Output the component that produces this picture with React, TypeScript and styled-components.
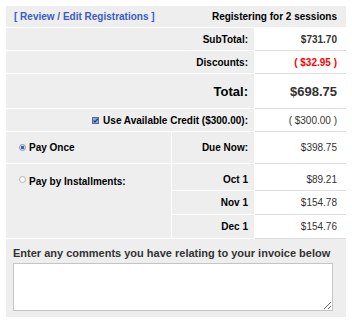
import React from "react";
import styled, { createGlobalStyle, css } from "styled-components";

const Global = createGlobalStyle`
  html, body { margin: 0; padding: 0; background: #ffffff; }
  body { font-family: "Liberation Sans", Arial, sans-serif; }
`;

const Page = styled.div`
  padding: 6px 0 0 6px;
`;

const Table = styled.div`
  width: 340px;
  display: grid;
  grid-template-columns: 165px 82px 91px;
  grid-template-rows: 21px 22px 22px 34px 22px 31px 26px 23px 23px 78px;
  gap: 1px;
  background: #ffffff;
  font-size: 10px;
  font-weight: bold;
  color: #000;
`;

const HeaderRow = styled.div`
  grid-column: 1 / -1;
  background: #eeeeee;
  display: flex;
  align-items: center;
  justify-content: space-between;
  padding: 0 9px 0 8px;
`;

const EditLink = styled.a`
  color: #3a5cc5;
  text-decoration: none;
  cursor: pointer;
`;

const LabelCell = styled.div<{ $wide?: boolean; $big?: boolean; $padTop?: number }>`
  grid-column: ${(p) => (p.$wide ? "1 / 3" : "2 / 3")};
  background: #eeeeee;
  display: flex;
  align-items: center;
  justify-content: flex-end;
  padding: ${(p) => (p.$padTop ? `${p.$padTop}px` : "0")} 6px 0 0;
  font-size: ${(p) => (p.$big ? "13px" : "10px")};
`;

const ValueCell = styled.div<{ $tone?: "red" | "strong" | "plain"; $big?: boolean; $padTop?: number }>`
  background: #ffffff;
  box-shadow: 0 1px 0 #dddddd;
  display: flex;
  align-items: center;
  justify-content: flex-end;
  padding: ${(p) => (p.$padTop ? `${p.$padTop}px` : "0")} 9px 0 0;
  font-size: ${(p) => (p.$big ? "13px" : "10px")};
  ${(p) =>
    p.$tone === "red"
      ? css`color: #ff0000; font-weight: bold;`
      : p.$tone === "plain"
      ? css`color: #333333; font-weight: normal;`
      : css`color: #333333; font-weight: bold;`}
`;

const OptionCell = styled.div<{ $rows?: number; $top?: boolean }>`
  grid-column: 1 / 2;
  grid-row: span ${(p) => p.$rows ?? 1};
  background: #eeeeee;
  display: flex;
  align-items: ${(p) => (p.$top ? "flex-start" : "center")};
  gap: 3px;
  padding: ${(p) => (p.$top ? "12px 0 0 13px" : "0 0 0 13px")};
`;

const Radio = styled.span<{ $checked?: boolean }>`
  box-sizing: border-box;
  width: 7px;
  height: 7px;
  border-radius: 50%;
  border: 1px solid ${(p) => (p.$checked ? "#7f8fb8" : "#b5b5b5")};
  background: ${(p) => (p.$checked ? "radial-gradient(circle, #3d5ea8 0 1.5px, #dfe6f5 2px)" : "#fafafa")};
  display: inline-block;
  flex: none;
  margin-top: ${(p) => (p.$checked ? "0" : "0")};
`;

const CheckBox = styled.span`
  width: 7px;
  height: 7px;
  margin-right: 4px;
  display: inline-flex;
  flex: none;
`;

const Comments = styled.div`
  grid-column: 1 / -1;
  background: #eeeeee;
  padding: 8px 13px 0 7px;
  display: flex;
  flex-direction: column;
  gap: 4px;
`;

const CommentLabel = styled.label`
  font-size: 11px;
  font-weight: bold;
  color: #333333;
`;

const CommentBox = styled.textarea`
  box-sizing: border-box;
  width: 320px;
  height: 48px;
  border: 1px solid #c4c4c4;
  background: #ffffff;
  margin: 0;
  resize: both;
`;

export default function App() {
  return (
    <>
      <Global />
      <Page>
        <Table>
          <HeaderRow>
            <EditLink>[ Review / Edit Registrations ]</EditLink>
            <span>Registering for 2 sessions</span>
          </HeaderRow>

          <LabelCell $wide>SubTotal:</LabelCell>
          <ValueCell $tone="strong">$731.70</ValueCell>

          <LabelCell $wide>Discounts:</LabelCell>
          <ValueCell $tone="red">( $32.95 )</ValueCell>

          <LabelCell $wide $big>Total:</LabelCell>
          <ValueCell $tone="strong" $big>$698.75</ValueCell>

          <LabelCell $wide>
            <CheckBox>
              <svg width="7" height="7" viewBox="0 0 7 7">
                <rect x="0.5" y="0.5" width="6" height="6" fill="#8ea6d8" stroke="#4d6aa8" />
                <path d="M1.6 3.6 L3 5 L5.6 1.8" fill="none" stroke="#1d2f5a" strokeWidth="1.1" />
              </svg>
            </CheckBox>
            Use Available Credit ($300.00):
          </LabelCell>
          <ValueCell $tone="plain">( $300.00 )</ValueCell>

          <OptionCell>
            <Radio $checked />
            Pay Once
          </OptionCell>
          <LabelCell>Due Now:</LabelCell>
          <ValueCell $tone="plain">$398.75</ValueCell>

          <OptionCell $rows={3} $top>
            <Radio />
            Pay by Installments:
          </OptionCell>
          <LabelCell $padTop={5}>Oct 1</LabelCell>
          <ValueCell $tone="plain" $padTop={5}>$89.21</ValueCell>
          <LabelCell>Nov 1</LabelCell>
          <ValueCell $tone="plain">$154.78</ValueCell>
          <LabelCell>Dec 1</LabelCell>
          <ValueCell $tone="plain">$154.76</ValueCell>

          <Comments>
            <CommentLabel htmlFor="invoice-comments">
              Enter any comments you have relating to your invoice below
            </CommentLabel>
            <CommentBox id="invoice-comments" />
          </Comments>
        </Table>
      </Page>
    </>
  );
}
